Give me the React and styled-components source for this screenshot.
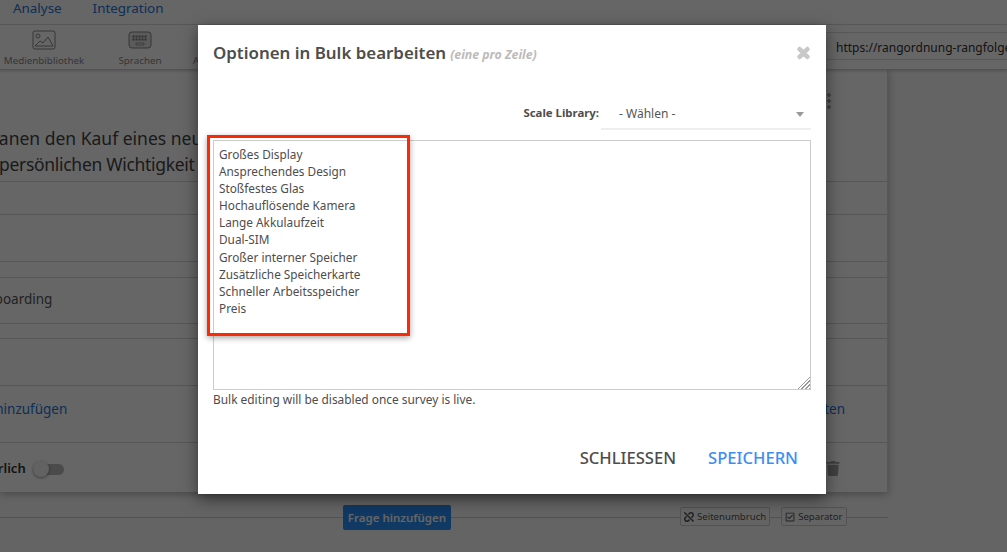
import styled, { createGlobalStyle } from "styled-components";
import { FaTimes, FaTrash, FaUnlink, FaRegCheckSquare } from "react-icons/fa";

const GlobalStyle = createGlobalStyle`
  html, body {
    margin: 0;
    height: 100%;
    overflow: hidden;
    font-family: "Noto Sans", "Open Sans", sans-serif;
  }
  * { box-sizing: border-box; }
`;

const Page = styled.div`
  position: relative;
  width: 1007px;
  height: 552px;
  overflow: hidden;
  background: #fafafa;
`;
const Nav = styled.nav`
  display: flex;
  gap: 31px;
  height: 25px;
  padding-left: 13px;
  align-items: center;
  background: #fff;
  border-bottom: 1px solid #e2e2e2;
  font-size: 13.4px;
  color: #2375d9;
  padding-bottom: 9px;
`;
const Toolbar = styled.div`
  display: flex;
  gap: 8px;
  height: 45px;
  background: #fff;
  border-bottom: 1px solid #ccc;
  box-shadow: 0 1px 3px rgba(0, 0, 0, 0.2);
  position: relative;
`;
const Tool = styled.div`
  width: ${(p) => p.$width}px;
  padding-top: 5px;
  display: flex;
  flex-direction: column;
  align-items: center;
  gap: 4px;
  font-size: 9.8px;
  line-height: 13px;
  color: #888;
`;
const UrlBox = styled.div`
  margin: 7px 0 9px auto;
  width: 181px;
  padding: 6px 0 0 10px;
  border-top: 1px solid #ddd;
  border-bottom: 1px solid #ddd;
  font-size: 12px;
  color: #333;
  white-space: nowrap;
  overflow: hidden;
`;
const Main = styled.div`
  width: 888px;
  height: 422px;
  background: #fff;
  border-right: 1px solid #ddd;
  box-shadow: 0 2px 8px rgba(0, 0, 0, 0.3);
`;
const Question = styled.div`
  height: 111px;
  padding-top: 55px;
  font-size: 17.5px;
  line-height: 26px;
  color: #444;
  white-space: nowrap;
  margin-left: ${(p) => p.$offset}px;
`;
const QuestionTail = styled.span`
  margin-left: 44px;
  letter-spacing: -0.3px;
`;
const Row = styled.div`
  height: ${(p) => p.$height}px;
  border-top: 1px solid #d8d8d8;
  padding-top: ${(p) => p.$top || 0}px;
  padding-right: ${(p) => p.$right || 0}px;
  display: flex;
  align-items: flex-start;
  justify-content: space-between;
  font-size: 13.5px;
  line-height: 20px;
  color: ${(p) => p.$color || "#555"};
  white-space: nowrap;
`;
const Clipped = styled.span`
  margin-left: ${(p) => p.$offset}px;
`;
const FootRow = styled(Row)`
  font-weight: 600;
  font-size: 13px;
  color: #333;
`;
const ToggleGroup = styled.div`
  display: flex;
  align-items: center;
  gap: 7px;
`;
const Toggle = styled.span`
  display: block;
  position: relative;
  width: 31px;
  height: 11px;
  margin-top: 2px;
  border-radius: 6px;
  background: #bbb;
  &::before {
    content: "";
    position: absolute;
    left: 0;
    top: -3px;
    width: 16px;
    height: 16px;
    border-radius: 50%;
    background: #f5f5f5;
    box-shadow: 0 1px 3px rgba(0, 0, 0, 0.4);
  }
`;
const Trash = styled(FaTrash)`
  width: 14px;
  height: 15px;
  color: #a0a0a0;
  margin-top: 3px;
`;
const PageActions = styled.div`
  width: 888px;
  height: 60px;
  padding: 13px 41px 0 343px;
  display: flex;
  align-items: flex-start;
  background: linear-gradient(#ccc, #ccc) 0 25px / 100% 1px no-repeat;
`;
const AddButton = styled.button`
  flex-shrink: 0;
  width: 108px;
  height: 25px;
  border: 0;
  border-radius: 2px;
  background: #2a8ffa;
  color: #fff;
  font: 600 11.5px "Noto Sans", sans-serif;
  white-space: nowrap;
  padding: 0;
`;
const SmallButton = styled.div`
  flex-shrink: 0;
  display: flex;
  align-items: center;
  gap: 3px;
  height: 19px;
  margin-top: 2px;
  margin-left: ${(p) => p.$left}px;
  padding: 0 3px;
  background: #fafafa;
  border: 1px solid #ccc;
  border-radius: 2px;
  font-size: 9.6px;
  color: #555;
  white-space: nowrap;
`;
const MoreDots = styled.div`
  position: absolute;
  left: 827px;
  top: 93px;
  width: 4px;
  height: 17px;
  background: radial-gradient(circle at 2px 2px, #aaa 1.6px, transparent 2px) 0 0 / 4px 6px repeat-y;
`;
const Overlay = styled.div`
  position: absolute;
  inset: 0;
  background: rgba(0, 0, 0, 0.6);
  padding: 25px 0 0 198px;
`;
const Modal = styled.div`
  width: 628px;
  height: 469px;
  background: #fff;
  box-shadow: 0 5px 15px rgba(0, 0, 0, 0.5);
  padding: 0 15px;
  display: flex;
  flex-direction: column;
`;
const ModalHead = styled.div`
  display: flex;
  align-items: center;
  justify-content: space-between;
  height: 55px;
`;
const ModalTitle = styled.h4`
  margin: 0;
  font-size: 16.9px;
  font-weight: 600;
  color: #4d4d4d;
`;
const Hint = styled.small`
  margin-left: 4px;
  font-size: 12.3px;
  font-style: italic;
  font-weight: 700;
  color: #bbb;
`;
const Close = styled(FaTimes)`
  width: 15px;
  height: 16px;
  color: #c8c8c8;
  stroke: currentColor;
  stroke-width: 50;
`;
const LibraryRow = styled.div`
  display: flex;
  justify-content: flex-end;
  align-items: center;
  gap: 2px;
  margin-top: 18px;
  height: 32px;
`;
const LibraryLabel = styled.span`
  margin-bottom: 3px;
  font-size: 11.4px;
  font-weight: 700;
  color: #4d4d4d;
`;
const Select = styled.div`
  position: relative;
  width: 210px;
  height: 32px;
  padding: 7px 0 0 18px;
  border-bottom: 2px solid #eee;
  font-size: 12px;
  color: #555;
  &::after {
    content: "";
    position: absolute;
    right: 7px;
    top: 14px;
    border: 4px solid transparent;
    border-top: 5px solid #999;
    border-bottom: 0;
  }
`;
const Field = styled.div`
  position: relative;
  margin-top: 10px;
`;
const Textarea = styled.textarea`
  display: block;
  width: 598px;
  height: 250px;
  padding: 5px;
  border: 1px solid #ccc;
  border-radius: 0;
  outline: none;
  resize: none;
  font: 11.8px/17.1px "Noto Sans", sans-serif;
  color: #4d4d4d;
`;
const Grip = styled.span`
  position: absolute;
  right: 1px;
  bottom: 1px;
  width: 13px;
  height: 13px;
  background: repeating-linear-gradient(135deg, transparent 0 1.5px, #999 1.5px 2.6px);
  clip-path: polygon(100% 0, 100% 100%, 0 100%);
`;
const Highlight = styled.div`
  position: absolute;
  left: -6px;
  top: -5px;
  width: 203px;
  height: 201px;
  border: 3px solid #fb2a05;
  box-shadow: 0 2px 6px rgba(0, 0, 0, 0.35);
  pointer-events: none;
`;
const Note = styled.p`
  margin: 1px 0 0;
  font-size: 11.9px;
  line-height: 17px;
  color: #4d4d4d;
`;
const ModalActions = styled.div`
  display: flex;
  justify-content: flex-end;
  gap: 32px;
  margin-top: 38px;
  padding-right: 13px;
`;
const ActionButton = styled.button`
  border: 0;
  padding: 0;
  background: none;
  font: 500 16.6px "Noto Sans", sans-serif;
  color: ${(p) => p.$color};
`;

const ImageIcon = () => (
  <svg width="24" height="20" viewBox="0 0 24 20" fill="none" stroke="#888" strokeWidth="1">
    <rect x="1" y="1" width="22" height="18" rx="2" />
    <circle cx="6" cy="6" r="2" />
    <path d="M3 16l5-5 3 2 5-6 5 9z" />
  </svg>
);

const KeyboardIcon = () => (
  <svg width="24" height="20" viewBox="0 0 24 20" fill="none">
    <rect x="1" y="2" width="22" height="16" rx="3" fill="#e4e4e4" stroke="#888" />
    <path d="M4.5 6.5h15M4.5 9.5h15" stroke="#777" strokeWidth="2" strokeDasharray="2 1" />
    <path d="M8 13h8v2H8z" stroke="#888" strokeWidth="0.8" />
  </svg>
);

const options = [
  "Großes Display",
  "Ansprechendes Design",
  "Stoßfestes Glas",
  "Hochauflösende Kamera",
  "Lange Akkulaufzeit",
  "Dual-SIM",
  "Großer interner Speicher",
  "Zusätzliche Speicherkarte",
  "Schneller Arbeitsspeicher",
  "Preis",
];

const App = () => {
  return (
    <Page>
      <GlobalStyle />
      <Nav>
        <span>Analyse</span>
        <span>Integration</span>
      </Nav>
      <Toolbar>
        <Tool $width={88}>
          <ImageIcon />
          Medienbibliothek
        </Tool>
        <Tool $width={88}>
          <KeyboardIcon />
          Sprachen
        </Tool>
        <Tool $width={36}>
          <ImageIcon />
          Ansicht
        </Tool>
        <UrlBox>https://rangordnung-rangfolge</UrlBox>
      </Toolbar>
      <Main>
        <Question $offset={-45}>
          Sie planen den Kauf eines neuen Smartphones
          <br />
          <QuestionTail>persönlichen Wichtigkeit</QuestionTail>
        </Question>
        <Row $height={33} />
        <Row $height={47} />
        <Row $height={16} />
        <Row $height={46} $top={11}>
          <Clipped $offset={-28}>Keyboarding</Clipped>
        </Row>
        <Row $height={15} />
        <Row $height={47} />
        <Row $height={57} $top={13} $right={42} $color="#2375d9">
          <Clipped $offset={-52}>Option hinzufügen</Clipped>
          <span>Bearbeiten</span>
        </Row>
        <FootRow $height={50} $top={15} $right={47}>
          <ToggleGroup>
            <Clipped $offset={-49}>Erforderlich</Clipped>
            <Toggle />
          </ToggleGroup>
          <Trash />
        </FootRow>
      </Main>
      <PageActions>
        <AddButton>Frage hinzufügen</AddButton>
        <SmallButton $left={229}>
          <FaUnlink size={10} />
          Seitenumbruch
        </SmallButton>
        <SmallButton $left={11}>
          <FaRegCheckSquare size={10} />
          Separator
        </SmallButton>
      </PageActions>
      <MoreDots />
      <Overlay>
        <Modal>
          <ModalHead>
            <ModalTitle>
              Optionen in Bulk bearbeiten
              <Hint>(eine pro Zeile)</Hint>
            </ModalTitle>
            <Close />
          </ModalHead>
          <LibraryRow>
            <LibraryLabel>Scale Library:</LibraryLabel>
            <Select>- Wählen -</Select>
          </LibraryRow>
          <Field>
            <Textarea defaultValue={options.join("\n")} />
            <Grip />
            <Highlight />
          </Field>
          <Note>Bulk editing will be disabled once survey is live.</Note>
          <ModalActions>
            <ActionButton $color="#4d4d4d">SCHLIESSEN</ActionButton>
            <ActionButton $color="#3d8ef0">SPEICHERN</ActionButton>
          </ModalActions>
        </Modal>
      </Overlay>
    </Page>
  );
};

export default App;
